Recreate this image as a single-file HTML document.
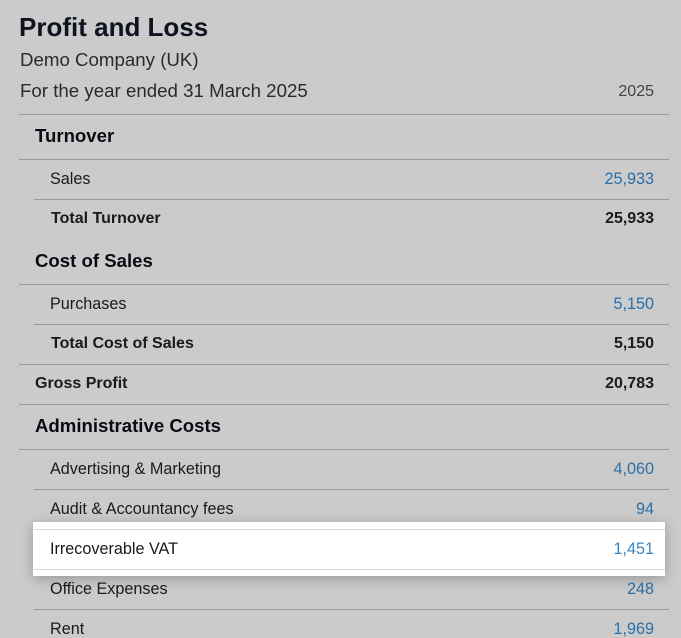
<!DOCTYPE html>
<html><head><style>
body{margin:0;width:681px;height:631px;overflow:hidden;background:#cbcbcb;font-family:"Liberation Sans",Arial,sans-serif;position:relative;color:#222}
.t{position:absolute;white-space:nowrap;line-height:1}
.ln{position:absolute;height:1px;background:#9a9a9a;right:12px}
.r{right:27px;text-align:right}
.b{font-weight:bold;color:#0a0a0a}
.h{font-size:18.6px;font-weight:bold;color:#0a0a12}
.i{font-size:16.2px;color:#1a1a1a}
.bl{color:#2a6fa8}
.tb{font-size:16px}
</style></head><body>
<div class="t" style="left:19px;top:14px;font-size:26px;font-weight:bold;color:#0f1320">Profit and Loss</div>
<div class="t" style="left:20px;top:51px;font-size:18.7px;color:#2a2a2a">Demo Company (UK)</div>
<div class="t" style="left:20px;top:82px;font-size:18.7px;color:#2a2a2a">For the year ended 31 March 2025</div>
<div class="t r" style="top:84px;font-size:16px;color:#444">2025</div>
<div class="ln" style="left:19px;top:114px"></div>

<div class="t h" style="left:35px;top:127px">Turnover</div>
<div class="ln" style="left:19px;top:159px"></div>
<div class="t i" style="left:50px;top:171px">Sales</div><div class="t i r bl" style="top:171px">25,933</div>
<div class="ln" style="left:34px;top:199px"></div>
<div class="t i b tb" style="left:51px;top:211px">Total Turnover</div><div class="t i r b tb" style="top:211px">25,933</div>

<div class="t h" style="left:35px;top:252px">Cost of Sales</div>
<div class="ln" style="left:19px;top:284px"></div>
<div class="t i" style="left:50px;top:296px">Purchases</div><div class="t i r bl" style="top:296px">5,150</div>
<div class="ln" style="left:34px;top:324px"></div>
<div class="t i b tb" style="left:51px;top:336px">Total Cost of Sales</div><div class="t i r b tb" style="top:336px">5,150</div>
<div class="ln" style="left:19px;top:364px"></div>
<div class="t i b tb" style="left:35px;top:376px">Gross Profit</div><div class="t i r b tb" style="top:376px">20,783</div>
<div class="ln" style="left:19px;top:404px"></div>

<div class="t h" style="left:35px;top:417px">Administrative Costs</div>
<div class="ln" style="left:19px;top:449px"></div>
<div class="t i" style="left:50px;top:461px">Advertising &amp; Marketing</div><div class="t i r bl" style="top:461px">4,060</div>
<div class="ln" style="left:34px;top:489px"></div>
<div class="t i" style="left:50px;top:501px">Audit &amp; Accountancy fees</div><div class="t i r bl" style="top:501px">94</div>

<div style="position:absolute;left:33px;top:522px;width:632px;height:54px;background:#fff;box-shadow:0 3px 12px rgba(0,0,0,0.25)"></div>
<div class="ln" style="left:34px;top:529px;background:#d4d4d4;right:16px"></div>
<div class="t i" style="left:50px;top:541px">Irrecoverable VAT</div><div class="t i r" style="top:541px;color:#3a86c4">1,451</div>
<div class="ln" style="left:34px;top:569px;background:#d4d4d4;right:16px"></div>

<div class="t i" style="left:50px;top:581px">Office Expenses</div><div class="t i r bl" style="top:581px">248</div>
<div class="ln" style="left:34px;top:609px"></div>
<div class="t i" style="left:50px;top:621px">Rent</div><div class="t i r bl" style="top:621px">1,969</div>
</body></html>
